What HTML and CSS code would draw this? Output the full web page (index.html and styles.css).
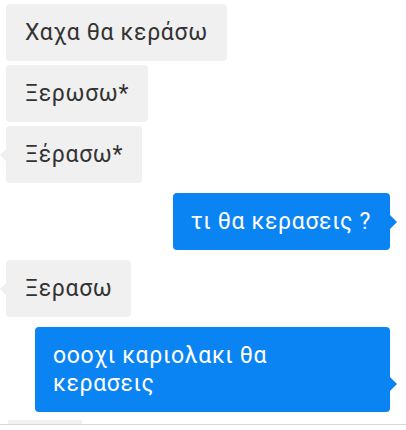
FILE: index.html
```html
<!DOCTYPE html>
<html lang="el">
<head>
<meta charset="utf-8">
<link rel="stylesheet" href="styles.css">
</head>
<body>
<div class="chat">
  <div class="msg in first"><span class="bubble">Χαχα θα κεράσω</span></div>
  <div class="msg in"><span class="bubble">Ξερωσω*</span></div>
  <div class="msg in"><span class="bubble tail">Ξέρασω*</span></div>
  <div class="msg out gap"><span class="bubble tail">τι θα κερασεις ?</span></div>
  <div class="msg in gap"><span class="bubble tail">Ξερασω</span></div>
  <div class="msg out gap"><span class="bubble tail wide">οοοχι καριολακι θα<br>κερασεις</span></div>
  <div class="peek"></div>
  <div class="footer"></div>
</div>
</body>
</html>
```
FILE: styles.css
```css
html, body {
  margin: 0;
  padding: 0;
  background: #ffffff;
  overflow: hidden;
}
.chat {
  display: flex;
  flex-direction: column;
  padding: 4px 16px 0 6px;
  font-family: Roboto, "Noto Sans", sans-serif;
  font-size: 23px;
  letter-spacing: 0.65px;
  line-height: 28px;
}
.msg {
  display: flex;
  margin-top: 4px;
}
.msg.first { margin-top: 0; }
.msg.gap { margin-top: 10px; }
.msg.in { justify-content: flex-start; }
.msg.out { justify-content: flex-end; }
.bubble {
  position: relative;
  display: block;
  padding: 15px 19px 14px 19px;
  border-radius: 4px;
  max-width: 318px;
}
.in .bubble {
  background: #f0f0f0;
  color: #333333;
}
.out .bubble {
  background: #0b84f3;
  color: #ffffff;
  padding-left: 18px;
}
.bubble.wide { width: 318px; }
.in .bubble.tail::before {
  content: "";
  position: absolute;
  left: -6px;
  bottom: 22px;
  border-style: solid;
  border-width: 6px 6px 6px 0;
  border-color: transparent #f0f0f0 transparent transparent;
}
.out .bubble.tail::after {
  content: "";
  position: absolute;
  right: -7px;
  bottom: 21px;
  border-style: solid;
  border-width: 7px 0 7px 7px;
  border-color: transparent transparent transparent #0b84f3;
}
.peek {
  margin: 8px 0 0 2px;
  width: 74px;
  height: 4px;
  background: #f1f1f1;
}
.footer {
  margin: 0 -16px 0 -6px;
  border-top: 1px solid #d6d6d6;
  height: 20px;
}
```
